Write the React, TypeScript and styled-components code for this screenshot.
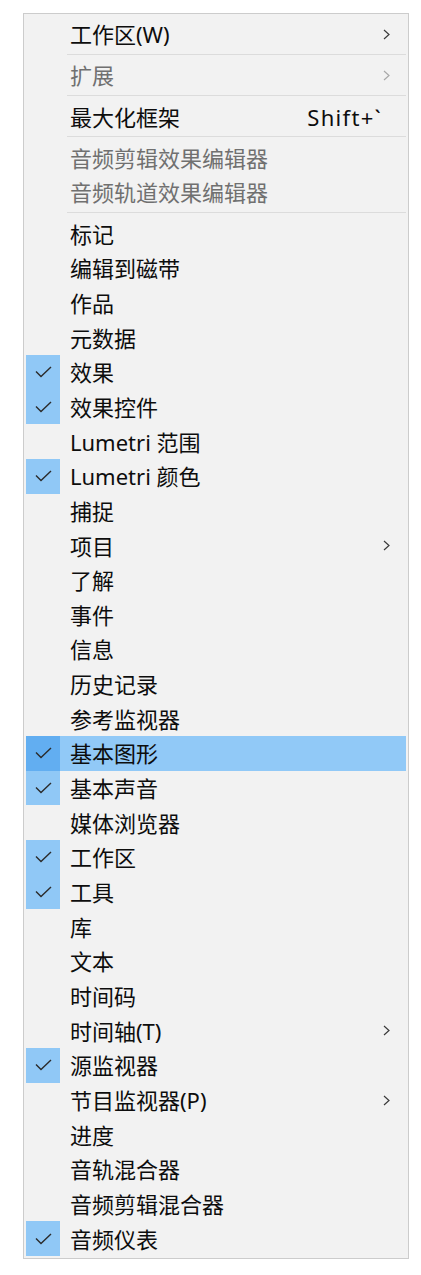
import React from "react";
import styled, { createGlobalStyle } from "styled-components";

// ------ Styled ------ //
const GlobalStyle = createGlobalStyle`
  html, body {
    margin: 0;
    padding: 0;
    background: #ffffff;
  }
  body {
    font-family: "Noto Sans", "Noto Sans CJK SC", sans-serif;
  }
`;
const Page = styled.div`
  padding: 13px 0 0 23px;
`;
const Menu = styled.div`
  width: 384px;
  padding: 3px 0 2px;
  background-color: #f2f2f2;
  border: 1px solid #cccccc;
`;
const Row = styled.div<{ $hover?: boolean }>`
  display: flex;
  align-items: center;
  height: 34.66px;
  margin: 0 2px;
  background-color: ${props => (props.$hover ? "#91c9f7" : "transparent")};
`;
const Check = styled.div<{ $on?: boolean; $hover?: boolean }>`
  display: flex;
  align-items: center;
  justify-content: center;
  width: 34px;
  height: 100%;
  flex-shrink: 0;
  background-color: ${props =>
    props.$hover && props.$on ? "#62aef1" : props.$on ? "#90c8f6" : "transparent"};
`;
const Label = styled.span<{ $disabled?: boolean }>`
  flex: 1;
  margin-left: 10px;
  font-size: 22px;
  line-height: 1;
  color: ${props => (props.$disabled ? "#707070" : "#0d0d0d")};
  white-space: nowrap;
`;
const Shortcut = styled.span`
  margin-right: 24px;
  font-size: 22px;
  letter-spacing: 1.3px;
  line-height: 1;
  color: #0d0d0d;
`;
const Arrow = styled.span`
  display: flex;
  width: 14px;
  margin-right: 9px;
`;
const Separator = styled.div`
  height: 1px;
  margin: 2px 2px 3.5px 43px;
  background-color: #dcdcdc;
`;

type Item =
  | { sep: true }
  | {
      sep?: false;
      label: string;
      checked?: boolean;
      disabled?: boolean;
      submenu?: boolean;
      shortcut?: string;
      hover?: boolean;
    };

const items: Item[] = [
  { label: "工作区(W)", submenu: true },
  { sep: true },
  { label: "扩展", submenu: true, disabled: true },
  { sep: true },
  { label: "最大化框架", shortcut: "Shift+`" },
  { sep: true },
  { label: "音频剪辑效果编辑器", disabled: true },
  { label: "音频轨道效果编辑器", disabled: true },
  { sep: true },
  { label: "标记" },
  { label: "编辑到磁带" },
  { label: "作品" },
  { label: "元数据" },
  { label: "效果", checked: true },
  { label: "效果控件", checked: true },
  { label: "Lumetri 范围" },
  { label: "Lumetri 颜色", checked: true },
  { label: "捕捉" },
  { label: "项目", submenu: true },
  { label: "了解" },
  { label: "事件" },
  { label: "信息" },
  { label: "历史记录" },
  { label: "参考监视器" },
  { label: "基本图形", checked: true, hover: true },
  { label: "基本声音", checked: true },
  { label: "媒体浏览器" },
  { label: "工作区", checked: true },
  { label: "工具", checked: true },
  { label: "库" },
  { label: "文本" },
  { label: "时间码" },
  { label: "时间轴(T)", submenu: true },
  { label: "源监视器", checked: true },
  { label: "节目监视器(P)", submenu: true },
  { label: "进度" },
  { label: "音轨混合器" },
  { label: "音频剪辑混合器" },
  { label: "音频仪表", checked: true },
];

function CheckMark() {
  return (
    <svg width="17" height="12" viewBox="0 0 17 12">
      <path d="M1 5.5 L6 10.5 L16 1" fill="none" stroke="#2b2b2b" strokeWidth="1.4" />
    </svg>
  );
}

function Chevron({ disabled }: { disabled?: boolean }) {
  return (
    <svg width="7" height="11" viewBox="0 0 7 11">
      <path
        d="M1 1 L6 5.5 L1 10"
        fill="none"
        stroke={disabled ? "#a8a8a8" : "#3a3a3a"}
        strokeWidth="1.2"
      />
    </svg>
  );
}

function App() {
  return (
    <>
      <GlobalStyle />
      <Page>
        <Menu>
          {items.map((item, i) =>
            item.sep ? (
              <Separator key={i} />
            ) : (
              <Row key={i} $hover={item.hover}>
                <Check $on={item.checked} $hover={item.hover}>
                  {item.checked && <CheckMark />}
                </Check>
                <Label $disabled={item.disabled}>{item.label}</Label>
                {item.shortcut && <Shortcut>{item.shortcut}</Shortcut>}
                {item.submenu && (
                  <Arrow>
                    <Chevron disabled={item.disabled} />
                  </Arrow>
                )}
              </Row>
            )
          )}
        </Menu>
      </Page>
    </>
  );
}

export default App;
